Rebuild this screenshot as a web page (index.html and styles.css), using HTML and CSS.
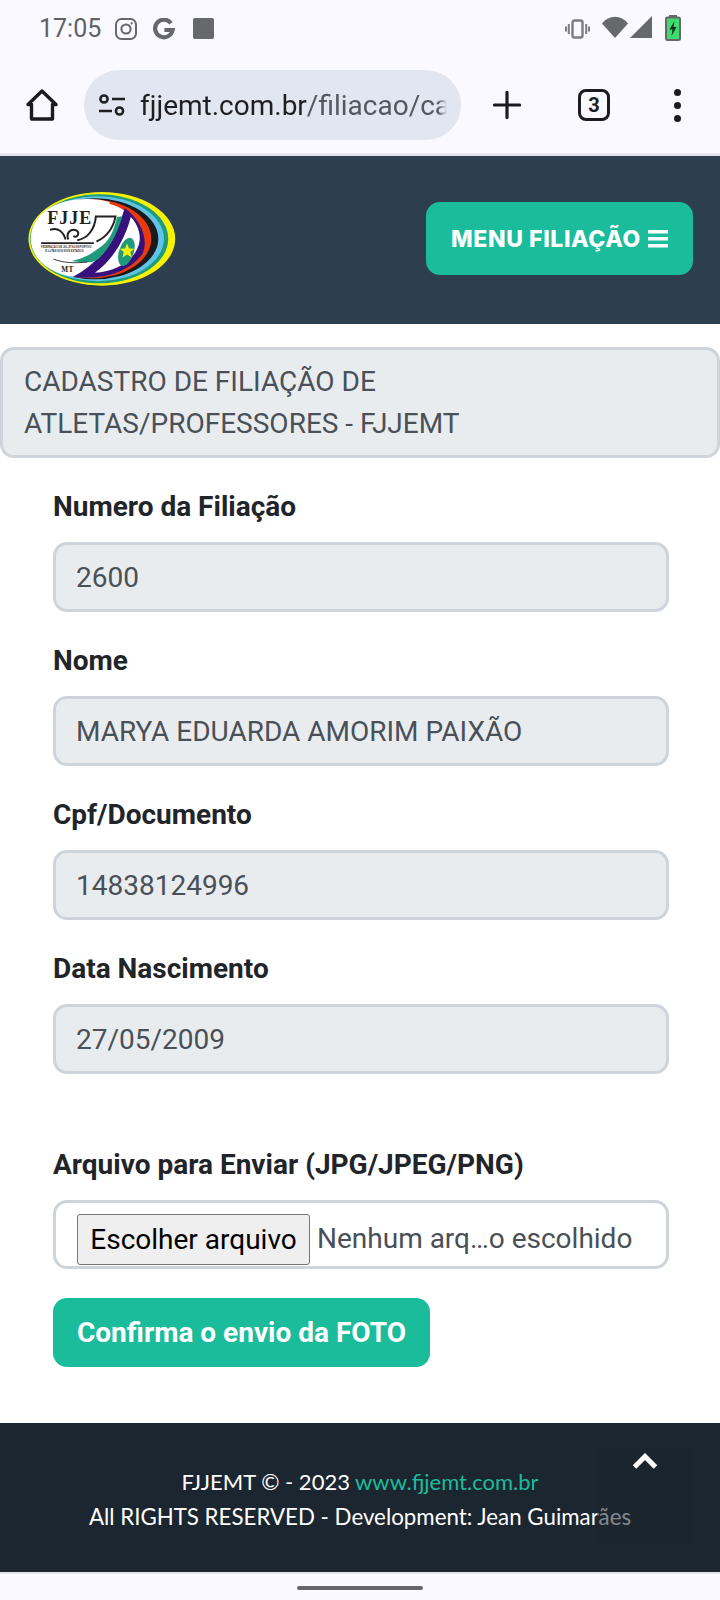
FILE: index.html
```html
<!DOCTYPE html>
<html lang="pt-BR">
<head>
    <meta charset="UTF-8" />
    <meta name="viewport" content="width=device-width, initial-scale=1.0" />
    <title>Cadastro de Filiação - FJJEMT</title>
    <link rel="stylesheet" href="styles.css">
</head>
<body>
    <div class="browser-top">
        <div class="status-bar">
            <div class="status-left">
                <span class="status-time">17:05</span>
                <svg class="status-icon" width="22" height="22" viewBox="0 0 22 22" fill="none" stroke="#66686b" stroke-width="2">
                    <rect x="1" y="1" width="20" height="20" rx="5.5"/>
                    <circle cx="11" cy="11" r="4.6"/>
                    <circle cx="16.6" cy="5.4" r="1.1" fill="#66686b" stroke="none"/>
                </svg>
                <svg class="status-icon" width="22" height="22" viewBox="0 0 22 22" fill="none" stroke="#66686b" stroke-width="4.2">
                    <path d="M18 5.2A8.8 8.8 0 1 0 19.6 12H11.4"/>
                </svg>
                <span class="status-square"></span>
            </div>
            <div class="status-right">
                <svg width="25" height="20" viewBox="0 0 25 20" fill="none" stroke="#7b7d80">
                    <rect x="7.5" y="1.5" width="10" height="17" rx="2" stroke-width="2.4"/>
                    <path d="M3.8 5v10M1 7.5v5M21.2 5v10M24 7.5v5" stroke-width="2"/>
                </svg>
                <svg class="wifi" width="26" height="22" viewBox="0 0 26 22"><path d="M0 7.5C7-1.500 19-1.500 26 7.500L13 22Z" fill="#66686b"/></svg>
                <svg class="signal" width="22" height="22" viewBox="0 0 22 22"><path d="M22 0V22H0Z" fill="#66686b"/></svg>
                <svg class="battery" width="16" height="26" viewBox="0 0 16 26">
                    <rect x="4" y="0" width="8" height="3" fill="#66686b"/>
                    <rect x="1" y="2.500" width="14" height="22.500" rx="1.500" fill="#3ddc6c" stroke="#66686b" stroke-width="2"/>
                    <path d="M9.500 6 4.500 14.500H7.500L6.500 21 11.500 12H8.500Z" fill="#16321f"/>
                </svg>
            </div>
        </div>
        <div class="toolbar">
            <svg class="home-icon" width="32" height="32" viewBox="0 0 32 32" fill="none" stroke="#1c1c1e" stroke-width="3.400" stroke-linejoin="round">
                <path d="M2 15.500 16 2l14 13.500h-3.500V30H5.500V15.500Z"/>
            </svg>
            <div class="address-bar">
                <svg class="tune-icon" width="26" height="22" viewBox="0 0 26 22" fill="none" stroke="#1f1f21" stroke-width="2.500">
                    <circle cx="5" cy="5" r="3.600"/>
                    <path d="M13 5h13M0 17h13"/>
                    <circle cx="20.500" cy="17" r="3.600"/>
                </svg>
                <span class="address-text"><b>fjjemt.com.br</b>/filiacao/ca</span>
            </div>
            <svg class="plus-icon" width="28" height="28" viewBox="0 0 28 28" stroke="#1c1c1e" stroke-width="3.200" stroke-linecap="round">
                <path d="M14 1.500v25M1.500 14h25"/>
            </svg>
            <span class="tab-count">3</span>
            <div class="more-dots"><i></i><i></i><i></i></div>
        </div>
    </div>

    <header class="site-header">
        <svg class="logo" width="148" height="94" viewBox="85 95 443 283">
            <ellipse cx="306" cy="236" rx="221" ry="141" fill="#f6f200"/>
            <ellipse cx="298" cy="236" rx="208" ry="134" fill="#1f9b7c"/>
            <ellipse cx="293" cy="236" rx="200" ry="128" fill="#5fc4ea"/>
            <ellipse cx="285" cy="236" rx="191" ry="122" fill="#1b1b1b"/>
            <ellipse cx="275" cy="236" rx="180" ry="119" fill="#e9390e"/>
            <ellipse cx="262" cy="236" rx="166" ry="116" fill="#ffffff"/>
            <path d="M92 236C92 160 170 104 300 118L330 125 260 350 222 351C140 340 92 290 92 236Z" fill="#ffffff"/>
            <path d="M375 143C352 215 315 300 218 351 310 362 390 335 428 282 448 240 425 180 375 143Z" fill="#37127c"/>
            <path d="M393 170C378 232 340 300 285 338 350 335 412 300 420 240 422 212 410 187 393 170Z" fill="#ffffff"/>
            <ellipse cx="380" cy="275" rx="22" ry="44" transform="rotate(18 380 275)" fill="#1f9b7c"/>
            <path d="M382 250l6 15 16 1-12 10 4 16-14-9-14 9 4-16-12-10 16-1Z" fill="#f6f200"/>
            <path d="M352 170C340 220 325 245 300 262 280 276 262 292 215 303 262 310 285 308 300 292 322 272 350 230 368 168Z" fill="#1f9b7c"/>
            <path d="M160 297C190 308 220 310 262 306" fill="none" stroke="#1b1b1b" stroke-width="2.500"/>
            <path d="M150 209C175 200 190 215 197 238M205 238C197 218 212 205 228 210 242 218 232 234 220 228M232 240C265 235 285 205 288 169H347C340 205 320 230 290 244" fill="none" stroke="#222" stroke-width="6"/>
            <path d="M123 249H282" stroke="#222" stroke-width="5.500"/>
            <text class="logo-name" x="142" y="192">FJJE</text>
            <text class="logo-small" x="123" y="263">FEDERAÇÃO DE JIU-JITSU ESPORTIVO</text>
            <text class="logo-small" x="136" y="275">E LUTAS DOS DOIS ESTADOS</text>
            <text class="logo-mt" x="184" y="337">MT</text>
        </svg>
        <button class="menu-button">MENU FILIAÇÃO
            <svg width="20" height="18" viewBox="0 0 20 18" fill="#fff"><path d="M0 0h20v3.500H0zM0 7h20v3.500H0zM0 14h20v3.500H0z"/></svg>
        </button>
    </header>

    <main>
        <div class="panel-title">CADASTRO DE FILIAÇÃO DE<br>ATLETAS/PROFESSORES - FJJEMT</div>

        <form class="form-box">
            <div class="field">
                <label>Numero da Filiação</label>
                <div class="input-box">2600</div>
            </div>
            <div class="field">
                <label>Nome</label>
                <div class="input-box">MARYA EDUARDA AMORIM PAIXÃO</div>
            </div>
            <div class="field">
                <label>Cpf/Documento</label>
                <div class="input-box">14838124996</div>
            </div>
            <div class="field">
                <label>Data Nascimento</label>
                <div class="input-box">27/05/2009</div>
            </div>
            <div class="field field-file">
                <label>Arquivo para Enviar (JPG/JPEG/PNG)</label>
                <div class="file-box">
                    <button type="button" class="file-button">Escolher arquivo</button>
                    <span>Nenhum arq…o escolhido</span>
                </div>
            </div>
            <button type="button" class="submit-button">Confirma o envio da FOTO</button>
        </form>
    </main>

    <footer class="site-footer">
        <p class="footer-line">FJJEMT © - 2023 <a href="#">www.fjjemt.com.br</a></p>
        <p>All RIGHTS RESERVED - Development: Jean Guimarães</p>
        <a class="back-top" href="#">
            <svg width="26" height="16" viewBox="0 0 26 16" fill="none" stroke="#fff" stroke-width="5"><path d="M2.500 14 13 3.500 23.500 14"/></svg>
        </a>
    </footer>

    <div class="nav-bar"><span></span></div>
</body>
</html>
```

FILE: styles.css
```css
* {
    margin: 0;
    padding: 0;
    box-sizing: border-box;
}

body {
    background-color: #f9f9ff;
    font-family: "Roboto", sans-serif;
    width: 720px;
    height: 1600px;
    overflow: hidden;
}

button {
    font-family: inherit;
}

.browser-top {
    height: 156px;
    border-bottom: 3px solid #e4e4ec;
}

.status-bar {
    display: flex;
    justify-content: space-between;
    height: 58px;
    padding: 16px 39px 0 39px;
}

.status-left {
    display: flex;
    align-items: flex-start;
    color: #5f6164;
}

.status-time {
    font-size: 25px;
    line-height: 26px;
    width: 76px;
}

.status-icon {
    margin: 2px 16px 0 0;
}

.status-square {
    width: 21px;
    height: 21px;
    margin: 2px 0 0 2px;
    background: #66686b;
    border-radius: 2px;
}

.status-right {
    display: flex;
    align-items: flex-start;
}

.status-right svg:first-child {
    margin: 3px 12px 0 0;
}

.wifi {
    margin-right: 2px;
}

.signal {
    margin-right: 13px;
}

.battery {
    margin-top: -1px;
}

.toolbar {
    display: flex;
    align-items: center;
    height: 70px;
    margin-top: 12px;
    padding-left: 26px;
}

.home-icon {
    margin-right: 26px;
}

.address-bar {
    display: flex;
    align-items: center;
    width: 377px;
    height: 70px;
    padding: 0 14px 0 15px;
    background: #e1e6f1;
    border-radius: 35px;
    margin-right: 32px;
}

.tune-icon {
    flex: none;
    margin-right: 15px;
}

.address-text {
    font-size: 28px;
    color: #55585e;
    white-space: nowrap;
    overflow: hidden;
    -webkit-mask-image: linear-gradient(to right, #000 97%, transparent);
    mask-image: linear-gradient(to right, #000 97%, transparent);
}

.address-text b {
    font-weight: 400;
    color: #1f1f21;
}

.plus-icon {
    margin-right: 57px;
}

.tab-count {
    display: flex;
    justify-content: center;
    align-items: center;
    width: 32px;
    height: 32px;
    border: 3.400px solid #1c1c1e;
    border-radius: 8px;
    font-size: 20px;
    font-weight: 700;
    color: #1c1c1e;
    margin-right: 64px;
}

.more-dots {
    display: flex;
    flex-direction: column;
    gap: 6px;
}

.more-dots i {
    display: block;
    width: 7px;
    height: 7px;
    background: #1c1c1e;
    border-radius: 50%;
}

.site-header {
    display: flex;
    justify-content: space-between;
    align-items: flex-start;
    height: 168px;
    padding: 36px 27px 0 28px;
    background: #2c3e50;
}

.menu-button {
    display: flex;
    align-items: center;
    justify-content: center;
    gap: 7px;
    width: 267px;
    height: 73px;
    margin-top: 10px;
    background: #1abc9c;
    border: none;
    border-radius: 14px;
    color: #fff;
    font-family: "Inter", sans-serif;
    font-size: 23px;
    font-weight: 800;
    letter-spacing: 0.6px;
}

.logo-name {
    font-family: "Liberation Serif", serif;
    font-size: 54px;
    font-weight: 700;
    letter-spacing: 3px;
    fill: #222;
}

.logo-small {
    font-family: "Liberation Sans", sans-serif;
    font-size: 8px;
    font-weight: 700;
    fill: #333;
}

.logo-mt {
    font-family: "Liberation Serif", serif;
    font-size: 22px;
    font-weight: 700;
    letter-spacing: 1px;
    fill: #222;
}

main {
    height: 1099px;
    padding-top: 23px;
    background: #fff;
}

.panel-title {
    height: 111px;
    padding: 11px 21px;
    background: #e9ecef;
    border: 3px solid #ced4da;
    border-radius: 14px;
    font-size: 28px;
    line-height: 42px;
    color: #495057;
}

.form-box {
    padding: 30px 51px 0 53px;
}

.field {
    margin-bottom: 30px;
}

.field label {
    display: block;
    height: 38px;
    margin-bottom: 16px;
    font-size: 28px;
    font-weight: 700;
    line-height: 38px;
    color: #212529;
}

.input-box {
    height: 70px;
    padding: 0 20px;
    background: #e9ecef;
    border: 3px solid #ced4da;
    border-radius: 14px;
    font-size: 28px;
    line-height: 66px;
    color: #495057;
}

.field-file {
    margin-top: 72px;
    margin-bottom: 29px;
}

.file-box {
    display: flex;
    height: 69px;
    padding: 11px 21px 0;
    background: #fff;
    border: 3px solid #ced4da;
    border-radius: 14px;
    font-size: 28px;
    line-height: 50px;
    color: #495057;
    overflow: hidden;
}

.file-button {
    flex: none;
    width: 233px;
    height: 51px;
    margin-right: 7px;
    background: #efefef;
    border: 1.500px solid #767676;
    border-radius: 3px;
    font-size: 28px;
    color: #000;
}

.submit-button {
    display: block;
    width: 377px;
    height: 69px;
    background: #1abc9c;
    border: none;
    border-radius: 14px;
    color: #fff;
    font-size: 28px;
    font-weight: 700;
}

.site-footer {
    position: relative;
    height: 149px;
    padding-top: 41px;
    background: #1c2630;
    text-align: center;
    font-family: "Lato", sans-serif;
    font-size: 22.300px;
    line-height: 35px;
    color: #fff;
}

.footer-line {
    font-size: 22px;
}

.site-footer a {
    color: #1abc9c;
    text-decoration: none;
}

.back-top {
    position: absolute;
    top: 24px;
    right: 27px;
    display: flex;
    justify-content: center;
    padding-top: 6px;
    width: 96px;
    height: 98px;
    background: rgba(28, 37, 46, 0.55);
    border-radius: 8px;
}

.nav-bar {
    height: 28px;
    border-top: 2px solid #e4e4f0;
    padding-top: 12px;
}

.nav-bar span {
    display: block;
    width: 126px;
    height: 4px;
    margin: 0 auto;
    background: #66666c;
    border-radius: 2px;
}
```
